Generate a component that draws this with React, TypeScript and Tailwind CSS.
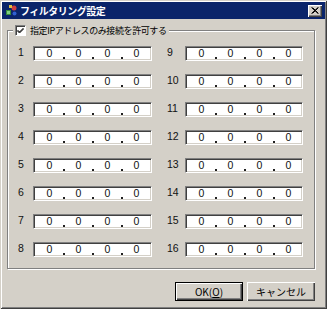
const left = [1, 2, 3, 4, 5, 6, 7, 8];
const right = [9, 10, 11, 12, 13, 14, 15, 16];

function Dot() {
  return (
    <div className="w-[22px] h-full flex justify-center items-end pb-[1px]">
      <div className="w-[2px] h-[2px] bg-[#202020]" />
    </div>
  );
}

function IpBox({ w }: { w: string }) {
  return (
    <div
      className={`${w} h-[15px] bg-white border border-t-[#808080] border-l-[#808080] border-b-white border-r-white shadow-[inset_1px_1px_0_#404040,inset_-1px_-1px_0_#d4d0c8] flex items-stretch pl-[12px] text-[10.5px] leading-[12px] text-[#111]`}
    >
      <span className="w-[7px] text-center">0</span>
      <Dot />
      <span className="w-[7px] text-center">0</span>
      <Dot />
      <span className="w-[7px] text-center">0</span>
      <Dot />
      <span className="w-[7px] text-center">0</span>
    </div>
  );
}

function Row({ n, labelW, boxW }: { n: number; labelW: string; boxW: string }) {
  return (
    <div className="flex h-[15px] items-start">
      <span className={`${labelW} text-[10.5px] leading-[12px] text-[#111]`}>{n}</span>
      <IpBox w={boxW} />
    </div>
  );
}

export default function App() {
  return (
    <div
      className="w-[327px] h-[309px] bg-[#d4d0c8] p-[2px] shadow-[inset_1px_1px_0_#d4d0c8,inset_-1px_-1px_0_#404040,inset_2px_2px_0_#fff,inset_-2px_-2px_0_#808080] flex flex-col"
      style={{ fontFamily: '"Liberation Sans", "Noto Sans CJK JP", sans-serif' }}
    >
      {/* title bar */}
      <div className="h-[17px] bg-[#0a246a] flex items-center pl-[3px] pr-[3px]">
        <svg width="13" height="13" viewBox="0 0 13 13">
          <rect x="1" y="6" width="5" height="5" fill="#3a8a3a" />
          <rect x="2" y="7" width="3" height="3" fill="#7fd07f" />
          <circle cx="9" cy="4" r="2.5" fill="#d04040" />
          <circle cx="9.5" cy="9.5" r="2" fill="#3060d0" />
          <rect x="4" y="1" width="3" height="3" fill="#e0c040" />
        </svg>
        <span
          className="ml-[2px] text-white font-bold text-[10px] leading-none tracking-[-0.5px]"
          style={{ fontFamily: '"Noto Sans CJK JP", sans-serif' }}
        >
          フィルタリング設定
        </span>
        <div className="ml-auto w-[14px] h-[12px] bg-[#d4d0c8] shadow-[inset_1px_1px_0_#fff,inset_-1px_-1px_0_#404040,inset_-2px_-2px_0_#808080] flex items-center justify-center">
          <svg width="8" height="7" viewBox="0 0 8 7">
            <path d="M0.5 0.5 L7 6.5 M1.5 0.5 L7.5 6.5 M7 0.5 L0.5 6.5 M7.5 0.5 L1.5 6.5" stroke="#000" strokeWidth="1" />
          </svg>
        </div>
      </div>

      {/* group box */}
      <div className="relative mt-[11px] ml-[5px] w-[308px] h-[239px] border border-[#808080] shadow-[inset_1px_1px_0_#fff,1px_1px_0_#fff] pt-[15px] pl-[10px]">
        <div className="absolute -top-[7px] left-[5px] bg-[#d4d0c8] flex items-center px-[2px] h-[13px]">
          <div className="w-[11px] h-[11px] bg-white border border-t-[#808080] border-l-[#808080] border-b-white border-r-white shadow-[inset_1px_1px_0_#404040] flex items-center justify-center">
            <svg width="7" height="7" viewBox="0 0 7 7">
              <path d="M0.5 3 L2.5 5 L6.5 1 M0.5 4 L2.5 6 L6.5 2" stroke="#000" strokeWidth="1" fill="none" />
            </svg>
          </div>
          <span
            className="ml-[4px] text-[9px] leading-none text-black tracking-[-0.4px]"
            style={{ fontFamily: '"Noto Sans CJK JP", sans-serif' }}
          >
            指定IPアドレスのみ接続を許可する
          </span>
        </div>
        <div className="flex gap-[15px]">
          <div className="flex flex-col gap-[13px]">
            {left.map((n) => (
              <Row key={n} n={n} labelW="w-[15px]" boxW="w-[119px]" />
            ))}
          </div>
          <div className="flex flex-col gap-[13px]">
            {right.map((n) => (
              <Row key={n} n={n} labelW="w-[18px]" boxW="w-[118px]" />
            ))}
          </div>
        </div>
      </div>

      {/* buttons */}
      <div className="mt-[13px] flex justify-end gap-[4px] pr-[10px]">
        <button className="w-[68px] h-[19px] bg-[#d4d0c8] border border-black shadow-[inset_1px_1px_0_#fff,inset_-1px_-1px_0_#404040,inset_-2px_-2px_0_#808080] text-[10px] text-black flex items-center justify-center" style={{ fontFamily: '"Noto Sans CJK JP", sans-serif' }}>
          OK(<span className="underline">O</span>)
        </button>
        <button className="w-[68px] h-[19px] bg-[#d4d0c8] shadow-[inset_1px_1px_0_#fff,inset_-1px_-1px_0_#404040,inset_-2px_-2px_0_#808080] text-[10px] text-black flex items-center justify-center" style={{ fontFamily: '"Noto Sans CJK JP", sans-serif' }}>
          キャンセル
        </button>
      </div>
    </div>
  );
}
